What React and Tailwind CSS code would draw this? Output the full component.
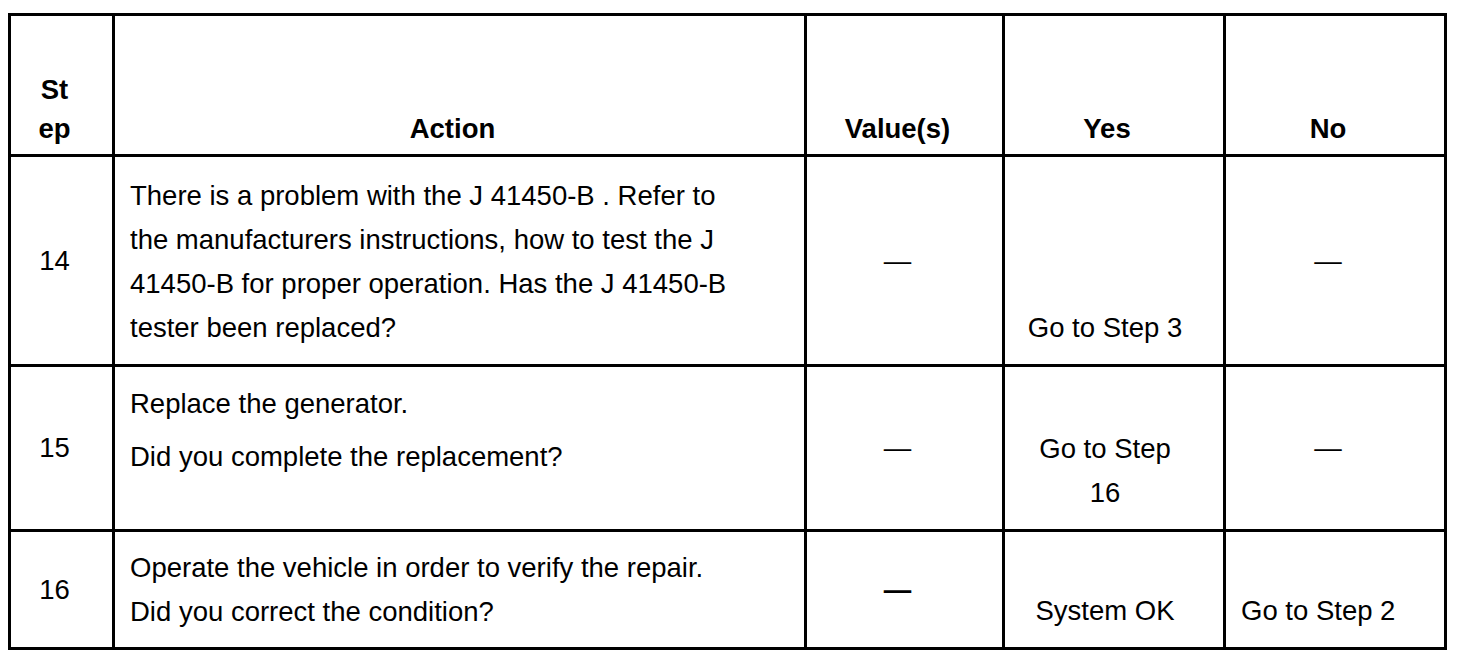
import React from 'react';

const rows = [
  {
    step: '14',
    action: [
      [
        'There is a problem with the J 41450-B . Refer to',
        'the manufacturers instructions, how to test the J',
        '41450-B for proper operation. Has the J 41450-B',
        'tester been replaced?',
      ],
    ],
    yes: ['Go to Step 3'],
    no: null,
    top: 'pt-[17px]',
  },
  {
    step: '15',
    action: [['Replace the generator.'], ['Did you complete the replacement?']],
    yes: ['Go to Step', '16'],
    no: null,
    top: 'pt-[15px]',
  },
  {
    step: '16',
    action: [['Operate the vehicle in order to verify the repair.', 'Did you correct the condition?']],
    yes: ['System OK'],
    no: ['Go to Step 2'],
    top: 'pt-[14px]',
    boldDash: true,
  },
];

const Lines = ({ lines }) =>
  lines.map((l, i) => (
    <React.Fragment key={i}>
      {l}
      {i < lines.length - 1 && <br />}
    </React.Fragment>
  ));

export default function App() {
  return (
    <div className="bg-white w-[1472px] h-[662px] pt-[13px] pl-[8px] font-['Liberation_Sans',Arial,sans-serif] text-black text-[27.5px]">
      <div className="grid w-fit grid-cols-[101px_689px_195px_218px_218px] grid-rows-[138px_207px_162px_115px] gap-[3px] bg-black p-[3px]">
        {/* header */}
        <div className="bg-white flex items-end justify-center pl-1 pr-[18px] pb-[6px] font-bold leading-[39px] text-center">
          St<br />ep
        </div>
        <div className="bg-white flex items-end justify-center pl-1 pr-[18px] pb-[6px] font-bold leading-[39px]">
          Action
        </div>
        <div className="bg-white flex items-end justify-center pl-1 pr-[18px] pb-[6px] font-bold leading-[39px]">
          Value(s)
        </div>
        <div className="bg-white flex items-end justify-center pl-1 pr-[18px] pb-[6px] font-bold leading-[39px]">
          Yes
        </div>
        <div className="bg-white flex items-end justify-center pl-1 pr-[18px] pb-[6px] font-bold leading-[39px]">
          No
        </div>

        {rows.map((r) => (
          <React.Fragment key={r.step}>
            <div className="bg-white flex items-center justify-center pl-1 pr-[18px] leading-[44px]">
              {r.step}
            </div>
            <div className={`bg-white pl-[15px] ${r.top} leading-[44px] whitespace-nowrap`}>
              {r.action.map((p, i) => (
                <p key={i} className={i > 0 ? 'mt-[9px]' : ''}>
                  <Lines lines={p} />
                </p>
              ))}
            </div>
            <div className={`bg-white flex items-center justify-center pl-1 pr-[18px] leading-[44px] ${r.boldDash ? 'font-bold' : ''}`}>
              —
            </div>
            <div className="bg-white flex items-end justify-center pl-1 pr-[22px] pb-[14px] leading-[44px] text-center whitespace-nowrap">
              <div>
                <Lines lines={r.yes} />
              </div>
            </div>
            {r.no ? (
              <div className="bg-white flex items-end pl-[15px] pb-[14px] leading-[44px] whitespace-nowrap">
                <Lines lines={r.no} />
              </div>
            ) : (
              <div className="bg-white flex items-center justify-center pl-1 pr-[18px] leading-[44px]">
                —
              </div>
            )}
          </React.Fragment>
        ))}
      </div>
    </div>
  );
}
